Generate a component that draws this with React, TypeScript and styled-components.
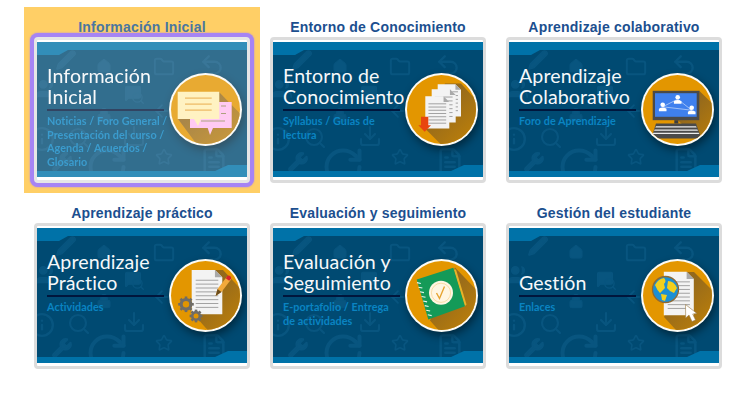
import React from "react";
import styled, { createGlobalStyle } from "styled-components";
import { Folder, Undo2, Search, Info, Download, Star, Wrench, RotateCw, FileText, ArrowLeft, Lock, Home, Users, MessageSquare, Pencil } from "lucide-react";

const Global = createGlobalStyle`
  html, body { margin: 0; padding: 0; background: #fff; }
  body { font-family: "Liberation Sans", Arial, sans-serif; }
`;

const Page = styled.div`
  display: grid;
  grid-template-columns: repeat(3, 236px);
  grid-auto-rows: 186px;
  padding: 7px 0 0 24px;
  width: 748px;
  height: 415px;
  box-sizing: border-box;
  overflow: hidden;
`;

const Cell = styled.a<{ $active?: boolean }>`
  display: flex;
  flex-direction: column;
  align-items: center;
  background: ${(p) => (p.$active ? "#ffcf66" : "transparent")};
`;

const CellTitle = styled.div<{ $active?: boolean }>`
  height: 30px;
  padding-top: 12px;
  box-sizing: border-box;
  line-height: 16px;
  font-size: 14px;
  font-weight: 700;
  letter-spacing: 0.2px;
  white-space: nowrap;
  color: ${(p) => (p.$active ? "#4a76a0" : "#1c4f8f")};
`;

const Frame = styled.div<{ $active?: boolean }>`
  width: 216px;
  height: 146px;
  box-sizing: border-box;
  border: 3px solid ${(p) => (p.$active ? "#e6e6e6" : "#dcdcdc")};
  border-radius: 4px;
  padding: 2px 0 3px;
  background: #fff;
  box-shadow: ${(p) => (p.$active ? "0 0 0 4px #a684f4, 0 0 2px 4px #a684f4" : "none")};
`;

const Banner = styled.div<{ $active?: boolean }>`
  position: relative;
  display: flex;
  align-items: center;
  width: 210px;
  height: 135px;
  overflow: hidden;
  background: #004a72;
  opacity: ${(p) => (p.$active ? 0.8 : 1)};
`;

const BackdropArt = styled.svg`
  position: absolute;
  inset: 0;
`;

const Copy = styled.div`
  position: relative;
  align-self: flex-start;
  flex: none;
  width: 128px;
  box-sizing: border-box;
  padding-left: 10px;
`;

const Heading = styled.div`
  height: 46px;
  margin-top: 19px;
  display: flex;
  flex-direction: column;
  justify-content: flex-end;
  font-family: "Lato", "Noto Sans", sans-serif;
  font-size: 19.6px;
  line-height: 21px;
  color: #f6f8fa;
  white-space: nowrap;
  letter-spacing: 0.1px;
`;

const Rule = styled.div`
  width: 117px;
  height: 2px;
  margin-top: 2px;
  background: #00163c;
`;

const Sub = styled.div`
  margin-top: 3px;
  font-family: "Lato", "Noto Sans", sans-serif;
  font-size: 10.8px;
  font-weight: 700;
  line-height: 13.6px;
  color: #0a84c2;
  white-space: nowrap;
  letter-spacing: 0.05px;
`;

const MedallionArt = styled.svg`
  position: relative;
  flex: none;
  width: 81px;
  height: 81px;
  overflow: visible;
  filter: drop-shadow(2px 4px 4px rgba(0, 0, 0, 0.45));
`;

const ICON = "#08557f";

function Backdrop() {
  const s = { stroke: ICON, fill: "none", strokeWidth: 2.2 };
  const f = { stroke: ICON, fill: ICON, strokeWidth: 1.5 };
  return (
    <BackdropArt width="210" height="135" viewBox="0 0 210 135">
      <Pencil x={18} y={7} width={22} height={22} {...f} />
      <Home x={59} y={16} width={16} height={16} {...f} />
      <Folder x={116} y={14} width={22} height={22} {...s} />
      <Undo2 x={162} y={10} width={26} height={26} {...s} />
      <Users x={-2} y={36} width={22} height={22} {...f} />
      <MessageSquare x={87} y={42} width={18} height={18} {...f} />
      <Search x={94} y={49} width={14} height={14} {...s} />
      <Lock x={59} y={65} width={16} height={16} {...f} />
      <ArrowLeft x={115} y={59} width={20} height={20} {...s} />
      <Info x={-8} y={84} width={26} height={26} {...s} />
      <Search x={30} y={84} width={24} height={24} {...s} />
      <Download x={85} y={82} width={24} height={24} {...s} />
      <Star x={118} y={106} width={18} height={18} {...s} />
      <Wrench x={14} y={109} width={22} height={22} {...f} />
      <RotateCw x={48} y={103} width={44} height={44} {...s} />
      <FileText x={163} y={105} width={28} height={28} {...s} />
      <path d="M0 0H210V8H31L22 13H0Z" fill="#0072a8" />
      <path d="M0 135V129H178L191 123H210V135Z" fill="#0072a8" />
    </BackdropArt>
  );
}

const Sheet = ({ x, y, w, h, lines = 6 }: { x: number; y: number; w: number; h: number; lines?: number }) => {
  const fold = w * 0.24;
  const rows = Array.from({ length: lines }, (_, i) => y + h * 0.22 + (i * h * 0.7) / lines);
  return (
    <g>
      <path d={`M${x} ${y}H${x + w - fold}L${x + w} ${y + fold}V${y + h}H${x}Z`} fill="#f3f3f3" />
      <path d={`M${x + w - fold} ${y}L${x + w} ${y + fold}H${x + w - fold}Z`} fill="#a9a9a9" />
      {rows.map((ry) => (
        <rect key={ry} x={x + w * 0.13} y={ry} width={w * 0.74} height="1" fill="#a2a2a2" />
      ))}
    </g>
  );
};

const Gear = ({ cx, cy, r }: { cx: number; cy: number; r: number }) => (
  <g>
    {Array.from({ length: 4 }, (_, i) => (
      <rect key={i} x={cx - 1.3} y={cy - r - 1.4} width="2.6" height={r * 2 + 2.8} fill="#6f6c66" transform={`rotate(${i * 45} ${cx} ${cy})`} />
    ))}
    <circle cx={cx} cy={cy} r={r} fill="#6f6c66" />
    <circle cx={cx} cy={cy} r={r * 0.5} fill="#e09400" />
  </g>
);

const Person = ({ x, y }: { x: number; y: number }) => (
  <g fill="#fff">
    <circle cx={x} cy={y - 2.2} r="2.3" />
    <path d={`M${x - 3.8} ${y + 4.2}V${y + 1.8}Q${x} ${y - 1} ${x + 3.8} ${y + 1.8}V${y + 4.2}Z`} />
  </g>
);

const icons: Record<string, React.ReactNode> = {
  chat: (
    <g>
      <polygon points="54,23 100,70 100,100 50,100 13,50" fill="url(#medShade)" />
      <path d="M25 33H66.7V59H48L45 66L42.7 59H25Z" fill="#ffbef0" />
      <g fill="#9a8a60">
        <rect x="56" y="36.5" width="5" height="1" />
        <rect x="56" y="44" width="5" height="1" />
        <rect x="36" y="51.5" width="24" height="1" />
      </g>
      <path d="M12.7 22.7H54.3V50H36L33 57L29 50H12.7Z" fill="#fff0b4" />
      <g fill="#e9a63a">
        <rect x="20" y="28.5" width="26.7" height="1.2" />
        <rect x="20" y="34.5" width="26.7" height="1.2" />
        <rect x="20" y="40.5" width="26.7" height="1.2" />
      </g>
    </g>
  ),
  docs: (
    <g transform="translate(-1 -.5)">
      <polygon points="45,15 61,15 100,58 100,100 65,100 25,60" fill="url(#medShade)" />
      <Sheet x={37.7} y={15.7} w={23.3} h={32.3} />
      <Sheet x={31.7} y={20.7} w={24} h={33.3} />
      <Sheet x={25.3} y={27.7} w={24} h={32.3} lines={7} />
      <path d="M21 48.3H28.3V56.7H31L24.7 63.3L18.3 56.7H21Z" fill="#e8450f" />
    </g>
  ),
  computer: (
    <g transform="translate(-1 -.5)">
      <polygon points="63,22 100,58 100,100 70,100 60,68 42,52" fill="url(#medShade)" />
      <rect x="16.7" y="22.3" width="46.6" height="29.4" fill="#4a4a4a" />
      <rect x="19" y="24.7" width="41.7" height="23.6" fill="#3f80ee" />
      <path d="M41.7 30.7L26.7 38.3L55.7 41.7Z" fill="none" stroke="#dfe9fb" strokeWidth=".6" />
      <Person x={41.7} y={31} />
      <Person x={26.7} y={38.5} />
      <Person x={55.7} y={41.5} />
      <rect x="38.3" y="51.7" width="4" height="3.3" fill="#3d3d3d" />
      <path d="M20 55H60L65.3 70H15.3Z" fill="#4a4a4a" />
      <g fill="#ececec">
        <path d="M20 57.7H60L60.7 59H19.3Z" />
        <path d="M18.6 61H61.4L62 62.3H18Z" />
        <path d="M17.3 64.3H62.7L63.3 65.6H16.7Z" />
      </g>
    </g>
  ),
  practice: (
    <g>
      <polygon points="50,15 58,15 100,60 100,100 65,100 31,62" fill="url(#medShade)" />
      <Sheet x={26.7} y={15} w={30.6} h={44.3} lines={8} />
      <path d="M50.6 41L52.5 34L62 21.5L66 24.5L56.5 37Z" fill="#f2a93b" />
      <path d="M60.7 23.2L62.6 20.7Q64 20 65.4 21.2Q66.6 22.4 66 23.8L64.2 25.8Z" fill="#d6252c" />
      <path d="M50.6 41L52.5 34L56.5 37Z" fill="#6b4d1d" />
      <Gear cx={21} cy={49.3} r={6.4} />
      <Gear cx={31} cy={61} r={5} />
    </g>
  ),
  notebook: (
    <g transform="translate(-1 -.5)">
      <polygon points="55,13 100,60 100,100 60,100 30,66" fill="url(#medShade)" />
      <polygon points="53.5,15 56,15 66.5,50 64.5,52" fill="#e9b22a" />
      <polygon points="16.7,25 53.3,13.3 65,51.7 28.3,65" fill="#149a58" />
      {[0, 1, 2, 3, 4, 5, 6, 7].map((i) => (
        <rect key={i} x={17 + i * 1.55} y={28 + i * 4.6} width="4" height="1.1" fill="#e8f5ee" transform={`rotate(12 ${19 + i * 1.55} ${28 + i * 4.6})`} />
      ))}
      <circle cx="41" cy="38.3" r="12" fill="#fff6e2" />
      <circle cx="41" cy="38.3" r="9.6" fill="none" stroke="#f2c26b" strokeWidth=".5" />
      <path d="M36.5 38.5L39.5 44L44.5 32" fill="none" stroke="#e6a431" strokeWidth="1.4" />
    </g>
  ),
  globe: (
    <g>
      <polygon points="48,17 57,17 100,60 100,100 62,100 27,62" fill="url(#medShade)" />
      <Sheet x={26.8} y={16.8} w={30} h={43.4} lines={8} />
      <circle cx="28.5" cy="34.5" r="13" fill="#1c8fd3" stroke="#8f6a34" strokeWidth="1.3" />
      <path d="M18 30Q21 24 27 23Q30 26 27 29L28 33L23 38Q20 35 18 30Z" fill="#f2cf1c" />
      <path d="M31 26Q37 26 40 33L37 38L33 36L30 33Z" fill="#f2cf1c" />
      <path d="M24 39L30 40L28 46L25 45Z" fill="#f2cf1c" />
      <path d="M48.5 49.5L48.7 63L52 60L55 66.5L58.5 65L55.7 59L60 58.5Z" fill="#fff" stroke="#9b7a45" strokeWidth=".6" />
    </g>
  ),
};

function Medallion({ kind }: { kind: string }) {
  return (
    <MedallionArt viewBox="0 0 81 81">
      <defs>
        <clipPath id="medClip">
          <circle cx="40.5" cy="40.5" r="34.5" />
        </clipPath>
        <linearGradient id="medShade" x1="0.25" y1="0.2" x2="0.85" y2="0.85">
          <stop offset="0" stopColor="#94691c" />
          <stop offset="1" stopColor="#d08a00" />
        </linearGradient>
      </defs>
      <circle cx="40.5" cy="40.5" r="36.5" fill="#fbfbf6" />
      <circle cx="40.5" cy="40.5" r="34.5" fill="#e39600" />
      <g clipPath="url(#medClip)">{icons[kind]}</g>
    </MedallionArt>
  );
}

const cards = [
  { label: "Información Inicial", title: ["Información", "Inicial"], sub: ["Noticias / Foro General /", "Presentación del curso /", "Agenda / Acuerdos /", "Glosario"], kind: "chat", active: true },
  { label: "Entorno de Conocimiento", title: ["Entorno de", "Conocimiento"], sub: ["Syllabus / Guías de", "lectura"], kind: "docs" },
  { label: "Aprendizaje colaborativo", title: ["Aprendizaje", "Colaborativo"], sub: ["Foro de Aprendizaje"], kind: "computer" },
  { label: "Aprendizaje práctico", title: ["Aprendizaje", "Práctico"], sub: ["Actividades"], kind: "practice" },
  { label: "Evaluación y seguimiento", title: ["Evaluación y", "Seguimiento"], sub: ["E-portafolio / Entrega", "de actividades"], kind: "notebook" },
  { label: "Gestión del estudiante", title: ["Gestión"], sub: ["Enlaces"], kind: "globe" },
];

export default function App() {
  return (
    <>
      <Global />
      <Page>
        {cards.map((c) => (
          <Cell key={c.label} $active={c.active}>
            <CellTitle $active={c.active}>{c.label}</CellTitle>
            <Frame $active={c.active}>
              <Banner $active={c.active}>
                <Backdrop />
                <Copy>
                  <Heading>
                    {c.title.map((t) => (
                      <div key={t}>{t}</div>
                    ))}
                  </Heading>
                  <Rule />
                  <Sub>
                    {c.sub.map((t) => (
                      <div key={t}>{t}</div>
                    ))}
                  </Sub>
                </Copy>
                <Medallion kind={c.kind} />
              </Banner>
            </Frame>
          </Cell>
        ))}
      </Page>
    </>
  );
}
